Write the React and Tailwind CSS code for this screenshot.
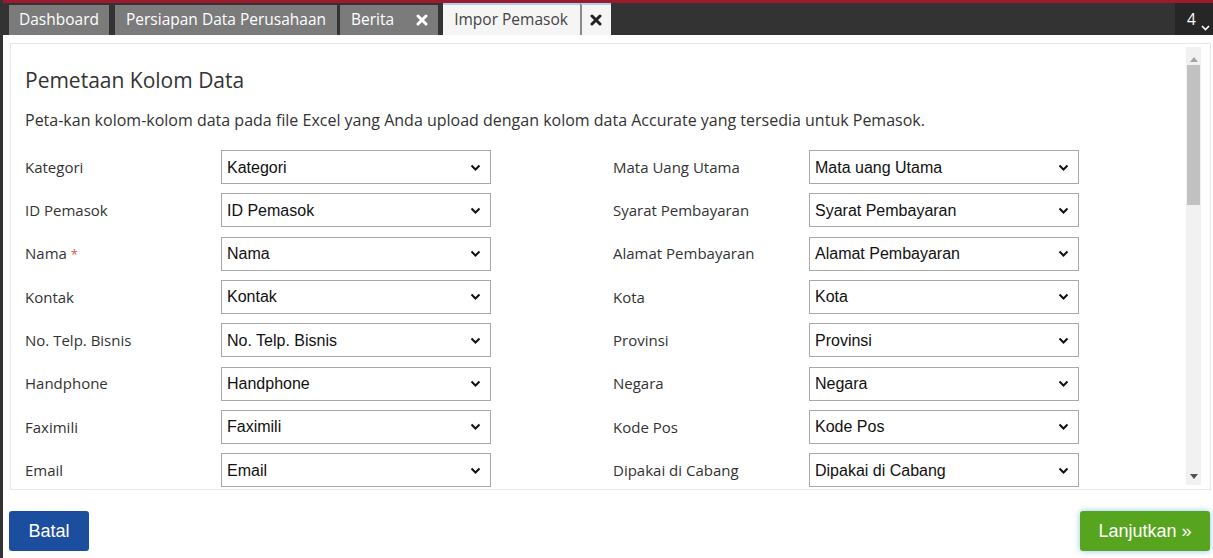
import React from "react";

const left = [
  ["Kategori", "Kategori"],
  ["ID Pemasok", "ID Pemasok"],
  ["Nama", "Nama", true],
  ["Kontak", "Kontak"],
  ["No. Telp. Bisnis", "No. Telp. Bisnis"],
  ["Handphone", "Handphone"],
  ["Faximili", "Faximili"],
  ["Email", "Email"],
];
const right = [
  ["Mata Uang Utama", "Mata uang Utama"],
  ["Syarat Pembayaran", "Syarat Pembayaran"],
  ["Alamat Pembayaran", "Alamat Pembayaran"],
  ["Kota", "Kota"],
  ["Provinsi", "Provinsi"],
  ["Negara", "Negara"],
  ["Kode Pos", "Kode Pos"],
  ["Dipakai di Cabang", "Dipakai di Cabang"],
];

function Chevron() {
  return (
    <svg width="11" height="8" viewBox="0 0 11 8" className="shrink-0">
      <path d="M1.5 1.5 L5.5 5.5 L9.5 1.5" fill="none" stroke="#111" strokeWidth="2" />
    </svg>
  );
}

function Row({ label, value, req }) {
  return (
    <div className="flex items-center h-[34px]">
      <div className="w-[196px] shrink-0 text-[15px] text-[#333]">
        {label}
        {req && <span className="text-[#d9534f] ml-[4px] text-[13px]">*</span>}
      </div>
      <div className="w-[270px] h-[34px] border border-[#a9a9a9] bg-white flex items-center justify-between pl-[5px] pr-[9px] pt-[1px] font-['Liberation_Sans',Arial,sans-serif] text-[16px] text-[#111]">
        <span>{value}</span>
        <Chevron />
      </div>
    </div>
  );
}

function X({ color = "#fff" }) {
  return (
    <svg width="12" height="12" viewBox="0 0 12 12">
      <path d="M2 2 L10 10 M10 2 L2 10" stroke={color} strokeWidth="3" strokeLinecap="round" />
    </svg>
  );
}

export default function App() {
  return (
    <div className="w-[1213px] h-[558px] bg-white overflow-hidden font-['Open_Sans','Noto_Sans',sans-serif] flex flex-col border-l-[3px] border-[#333]">
      {/* top bar */}
      <div className="h-[35px] shrink-0 bg-[#333] border-t-[3px] border-[#9d1a2e] flex items-end ml-[-3px] pl-[9px]">
        <div className="h-[30px] bg-[#7b7b7b] text-white text-[15.5px] flex items-center px-[10px] mr-[6px]">Dashboard</div>
        <div className="h-[30px] bg-[#7b7b7b] text-white text-[15.5px] flex items-center px-[11px] mr-[3px]">Persiapan Data Perusahaan</div>
        <div className="h-[30px] bg-[#7b7b7b] text-white text-[15.5px] flex items-center pl-[11px] pr-[10px] gap-[22px] mr-[5px]">
          <span>Berita</span>
          <X />
        </div>
        <div className="h-[32px] bg-[#f5f5f5] border-t-2 border-[#a8d3ef] text-[#444] text-[15.5px] flex items-center pl-[11px] pr-[12px]">Impor Pemasok</div>
        <div className="h-[32px] bg-[#f5f5f5] border-t-2 border-[#a8d3ef] border-l-2 border-l-[#8a8a8a] flex items-center justify-center w-[31px]">
          <X color="#222" />
        </div>
        <div className="flex-1" />
        <div className="h-[32px] w-[38px] bg-[#262626] text-white text-[15.5px] flex items-start pt-[5px] pl-[12px] gap-[5px]">
          <span>4</span>
          <svg width="9" height="6" viewBox="0 0 9 6" className="mt-[17px]">
            <path d="M1 1 L4.5 4.5 L8 1" fill="none" stroke="#fff" strokeWidth="1.6" />
          </svg>
        </div>
      </div>

      {/* panel */}
      <div className="mt-[8px] ml-[7px] w-[1201px] h-[447px] border border-[#e6e6e6] flex overflow-hidden">
        <div className="flex-1 pl-[14px] pt-[21px] overflow-hidden">
          <h2 className="text-[21px] text-[#333] leading-[30px]">Pemetaan Kolom Data</h2>
          <p className="mt-[14px] text-[16px] text-[#333] leading-[22px]">
            Peta-kan kolom-kolom data pada file Excel yang Anda upload dengan kolom data Accurate yang tersedia untuk Pemasok.
          </p>
          <div className="mt-[19px] grid grid-cols-[588px_588px] gap-y-[9.33px]">
            {left.map((l, i) => (
              <React.Fragment key={i}>
                <Row label={l[0]} value={l[1]} req={l[2]} />
                <Row label={right[i][0]} value={right[i][1]} />
              </React.Fragment>
            ))}
          </div>
        </div>
        <div className="w-[15px] mr-[9px] mt-[3px] mb-[4px] bg-[#f1f1f1] flex flex-col items-center">
          <svg width="8" height="5" viewBox="0 0 8 5" className="mt-[10px]">
            <path d="M0 5 L4 0 L8 5Z" fill="#a3a3a3" />
          </svg>
          <div className="mt-[3px] w-[13px] h-[140px] bg-[#c1c1c1]" />
          <div className="flex-1" />
          <svg width="8" height="5" viewBox="0 0 8 5" className="mb-[6px]">
            <path d="M0 0 L8 0 L4 5Z" fill="#505050" />
          </svg>
        </div>
      </div>

      {/* footer */}
      <div className="flex justify-between items-start mt-[21px] pl-[6px] pr-[3px]">
        <button className="w-[80px] h-[40px] bg-[#1b4e9e] rounded-[3px] text-white text-[18px] font-['Liberation_Sans',Arial,sans-serif]">Batal</button>
        <button className="w-[130px] h-[40px] bg-[#57a41e] rounded-[3px] text-white text-[18px] font-['Liberation_Sans',Arial,sans-serif] shadow-[0_0_6px_rgba(102,175,233,0.7)]">Lanjutkan »</button>
      </div>
    </div>
  );
}
